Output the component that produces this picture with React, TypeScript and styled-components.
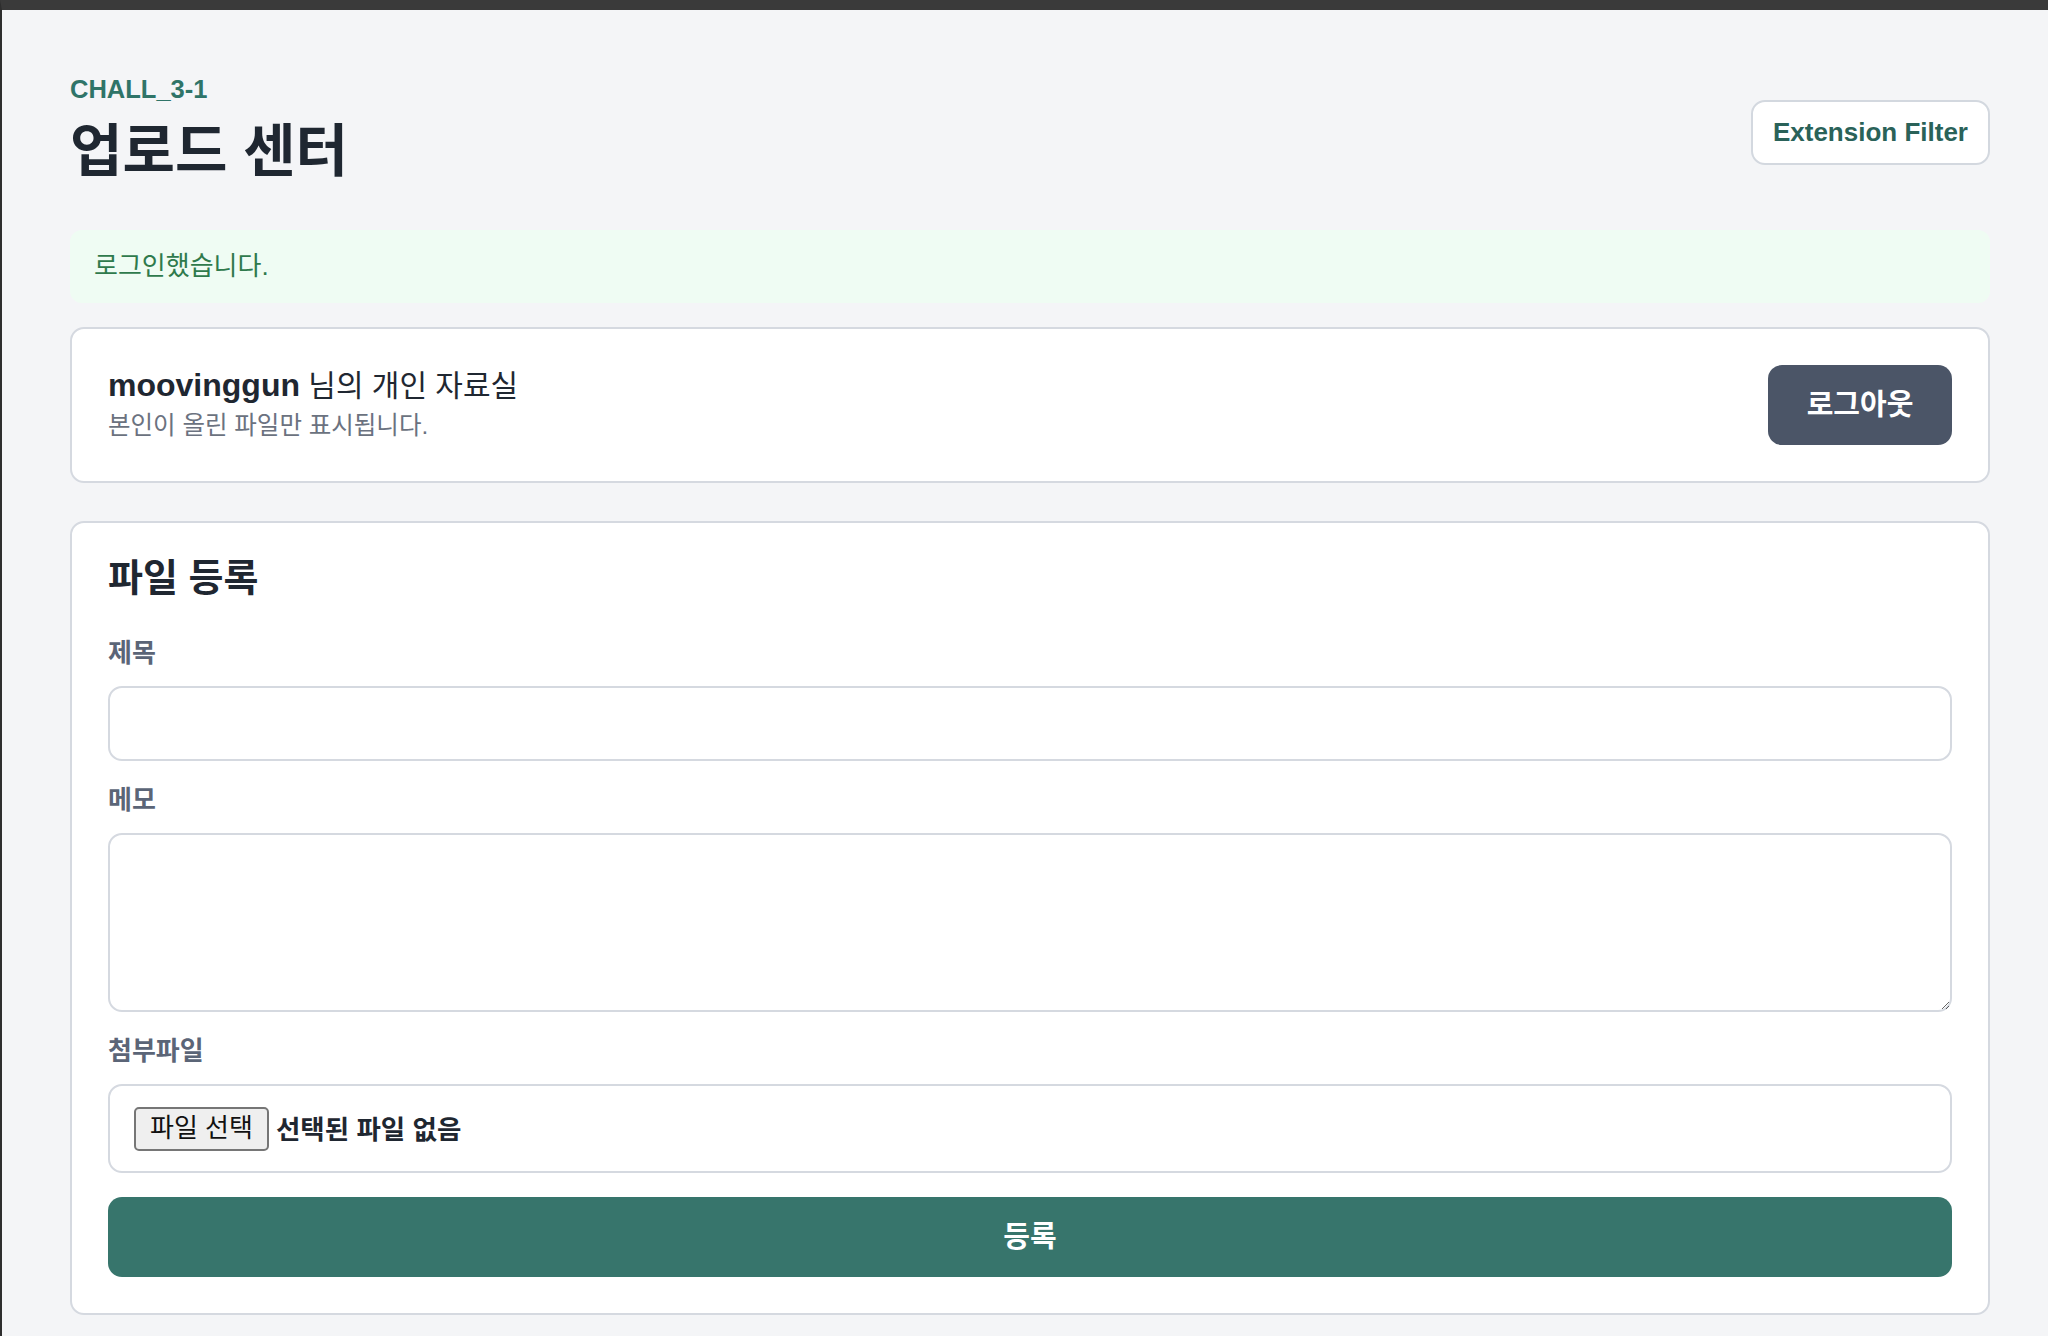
import React from "react";
import styled, { createGlobalStyle } from "styled-components";

const GlobalStyle = createGlobalStyle`
  *, *::before, *::after { box-sizing: border-box; }
  html, body { margin: 0; padding: 0; background: #f4f5f7; }
  body {
    font-family: "Liberation Sans", "Noto Sans CJK KR", "Noto Sans", sans-serif;
    color: #1f2933;
    -webkit-font-smoothing: antialiased;
  }
`;

const Frame = styled.div`
  min-height: 100vh;
  border-top: 10px solid #3a3a3a;
  border-left: 2px solid #2e2e2e;
  padding: 64px 58px 20px 68px;
  display: flex;
  flex-direction: column;
`;

const Header = styled.header`
  display: flex;
  justify-content: space-between;
  align-items: flex-start;
`;

const TitleBlock = styled.div`
  display: flex;
  flex-direction: column;
`;

const Eyebrow = styled.span`
  font-size: 25.5px;
  line-height: 30px;
  font-weight: 700;
  color: #2f7468;
`;

const Title = styled.h1`
  margin: 14px 0 0;
  font-size: 57px;
  line-height: 66px;
  font-weight: 700;
  color: #1f2731;
`;

const GhostButton = styled.button`
  margin-top: 26px;
  height: 65px;
  padding: 0 20px;
  border: 2px solid #d3d8df;
  border-radius: 14px;
  background: #ffffff;
  color: #2a6259;
  font-family: inherit;
  font-size: 26px;
  font-weight: 700;
  cursor: pointer;
`;

const Notice = styled.div`
  margin-top: 46px;
  padding: 22px 24px;
  border-radius: 12px;
  background: #effcf3;
  color: #2f7a4c;
  font-size: 26px;
  line-height: 29px;
`;

const Card = styled.section<{ $gap?: number }>`
  margin-top: ${(p) => p.$gap ?? 24}px;
  background: #ffffff;
  border: 2px solid #d5d9e0;
  border-radius: 14px;
  padding: 36px;
`;

const ProfileRow = styled.div`
  display: flex;
  justify-content: space-between;
  align-items: flex-start;
`;

const ProfileText = styled.div`
  display: flex;
  flex-direction: column;
`;

const Greeting = styled.div`
  font-size: 30px;
  line-height: 40px;
  color: #1f2731;

  strong {
    font-size: 32px;
    font-weight: 700;
  }
`;

const Hint = styled.div`
  margin-top: 4px;
  font-size: 24.5px;
  line-height: 32px;
  color: #6b7280;
`;

const SolidButton = styled.button<{ $tone: "slate" | "teal"; $wide?: boolean }>`
  height: 80px;
  width: ${(p) => (p.$wide ? "100%" : "184px")};
  padding: 0 0 6px;
  border: none;
  border-radius: 14px;
  background: ${(p) => (p.$tone === "slate" ? "#4b5567" : "#37756c")};
  color: #ffffff;
  font-family: inherit;
  font-size: 29px;
  font-weight: 700;
  cursor: pointer;
`;

const Form = styled.form`
  display: flex;
  flex-direction: column;
`;

const FormTitle = styled.h2`
  margin: 0 0 39px;
  font-size: 38px;
  line-height: 38px;
  font-weight: 700;
  color: #1f2731;
`;

const Field = styled.label<{ $first?: boolean }>`
  display: flex;
  flex-direction: column;
  gap: 17px;
  margin-top: ${(p) => (p.$first ? 1 : 23)}px;
`;

const FieldLabel = styled.span`
  font-size: 26px;
  line-height: 32px;
  font-weight: 700;
  color: #5b6577;
`;

const TextInput = styled.input`
  height: 75px;
  width: 100%;
  border: 2px solid #d5d9e0;
  border-radius: 14px;
  padding: 0 20px;
  font-family: inherit;
  font-size: 26px;
  color: #1f2731;
  background: #ffffff;
  outline: none;
`;

const TextArea = styled.textarea`
  height: 179px;
  width: 100%;
  border: 2px solid #d5d9e0;
  border-radius: 14px;
  padding: 16px 20px;
  font-family: inherit;
  font-size: 26px;
  color: #1f2731;
  background: #ffffff;
  resize: vertical;
  outline: none;
`;

const FileBox = styled.div`
  height: 89px;
  display: flex;
  align-items: center;
  gap: 7px;
  padding: 0 24px;
  border: 2px solid #d5d9e0;
  border-radius: 14px;
  background: #ffffff;

  input {
    display: none;
  }
`;

const FilePick = styled.span`
  height: 44px;
  display: inline-flex;
  align-items: center;
  padding: 0 14px 2px;
  border: 2px solid #767676;
  border-radius: 5px;
  background: #efefef;
  color: #111111;
  font-size: 26px;
  line-height: 1;
`;

const FileStatus = styled.span`
  font-size: 26.5px;
  font-weight: 700;
  color: #1f2731;
  padding-bottom: 2px;
`;

const Submit = styled(SolidButton)`
  margin-top: 24px;
`;

export default function App() {
  return (
    <>
      <GlobalStyle />
      <Frame>
        <Header>
          <TitleBlock>
            <Eyebrow>CHALL_3-1</Eyebrow>
            <Title>업로드 센터</Title>
          </TitleBlock>
          <GhostButton type="button">Extension Filter</GhostButton>
        </Header>

        <Notice>로그인했습니다.</Notice>

        <Card $gap={24}>
          <ProfileRow>
            <ProfileText>
              <Greeting>
                <strong>moovinggun</strong> 님의 개인 자료실
              </Greeting>
              <Hint>본인이 올린 파일만 표시됩니다.</Hint>
            </ProfileText>
            <SolidButton type="button" $tone="slate">
              로그아웃
            </SolidButton>
          </ProfileRow>
        </Card>

        <Card $gap={38}>
          <Form onSubmit={(e) => e.preventDefault()}>
            <FormTitle>파일 등록</FormTitle>
            <Field $first>
              <FieldLabel>제목</FieldLabel>
              <TextInput type="text" />
            </Field>
            <Field>
              <FieldLabel>메모</FieldLabel>
              <TextArea />
            </Field>
            <Field>
              <FieldLabel>첨부파일</FieldLabel>
              <FileBox>
                <input type="file" />
                <FilePick>파일 선택</FilePick>
                <FileStatus>선택된 파일 없음</FileStatus>
              </FileBox>
            </Field>
            <Submit type="submit" $tone="teal" $wide>
              등록
            </Submit>
          </Form>
        </Card>
      </Frame>
    </>
  );
}
